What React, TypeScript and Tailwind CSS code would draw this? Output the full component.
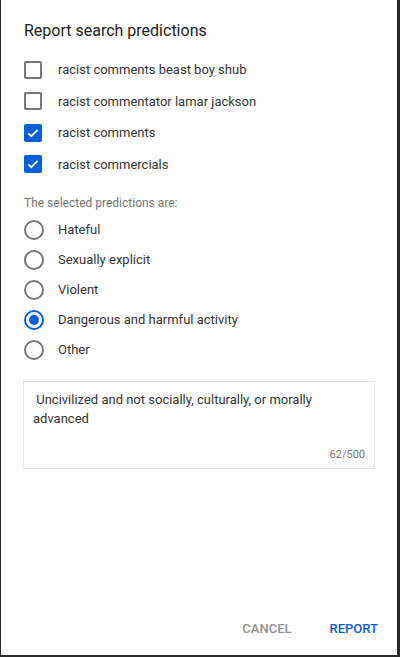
import React, { useState } from 'react';

const predictions = [
  'racist comments beast boy shub',
  'racist commentator lamar jackson',
  'racist comments',
  'racist commercials',
];

const reasons = ['Hateful', 'Sexually explicit', 'Violent', 'Dangerous and harmful activity', 'Other'];

export default function App() {
  const [checked, setChecked] = useState<boolean[]>([false, false, true, true]); // which predictions are ticked
  const [reason, setReason] = useState('Dangerous and harmful activity');
  const [text, setText] = useState(' Uncivilized and not socially, culturally, or morally advanced');

  return (
    <div
      className="w-[400px] h-[657px] bg-[#2b2b2b] pl-px pr-[3px] pb-[2px] text-[#0f0f0f]"
      style={{ fontFamily: 'Roboto, "Liberation Sans", sans-serif' }}
    >
      <div className="h-full bg-white flex flex-col">
        {/* Title */}
        <h2 className="pl-[23px] pt-[21px] text-[16px] leading-[20px] text-[#202124]">
          Report search predictions
        </h2>

        {/* Predictions */}
        <div className="mt-[13px] flex flex-col">
          {predictions.map((p, i) => (
            <label key={p} className="flex items-center h-[31.5px] pl-[23px] cursor-pointer">
              <input
                type="checkbox"
                className="hidden"
                checked={checked[i]}
                onChange={() => setChecked((prev) => prev.map((c, j) => (j === i ? !c : c)))}
              />
              {checked[i] ? (
                <span className="w-[18px] h-[18px] rounded-[2px] bg-[#065fd4] flex items-center justify-center">
                  <svg width="14" height="14" viewBox="0 0 24 24" fill="none" stroke="white" strokeWidth="3">
                    <path d="M4 12.5l5 5L20 6.5" />
                  </svg>
                </span>
              ) : (
                <span className="w-[18px] h-[18px] rounded-[2px] border-2 border-[#767676]" />
              )}
              <span className="ml-[16px] text-[13px] text-[#333]">{p}</span>
            </label>
          ))}
        </div>

        {/* Reasons */}
        <div className="mt-[14px] pl-[23px] text-[12px] text-[#757575]">The selected predictions are:</div>
        <div className="mt-[3px] flex flex-col">
          {reasons.map((r) => (
            <label key={r} className="flex items-center h-[30px] pl-[23px] cursor-pointer">
              <input type="radio" className="hidden" checked={reason === r} onChange={() => setReason(r)} />
              {reason === r ? (
                <span className="w-[20px] h-[20px] rounded-full border-2 border-[#065fd4] flex items-center justify-center">
                  <span className="w-[10px] h-[10px] rounded-full bg-[#065fd4]" />
                </span>
              ) : (
                <span className="w-[20px] h-[20px] rounded-full border-2 border-[#767676]" />
              )}
              <span className="ml-[14px] text-[13px] text-[#333]">{r}</span>
            </label>
          ))}
        </div>

        {/* Details */}
        <div className="mx-[22px] mt-[16px] h-[88px] border border-[#e5e5e5] flex flex-col px-[9px] pt-[8px] pb-[5px]">
          <textarea
            value={text}
            onChange={(e) => setText(e.target.value)}
            className="flex-1 resize-none outline-none text-[13px] leading-[19px] text-[#333]"
          />
          <div className="text-right text-[11px] text-[#757575]">{text.length}/500</div>
        </div>

        {/* Actions */}
        <div className="mt-auto flex justify-end gap-[38px] pr-[19px] pb-[17px] text-[13px] font-medium">
          <button className="text-[#909090]">CANCEL</button>
          <button className="text-[#065fd4]">REPORT</button>
        </div>
      </div>
    </div>
  );
}
